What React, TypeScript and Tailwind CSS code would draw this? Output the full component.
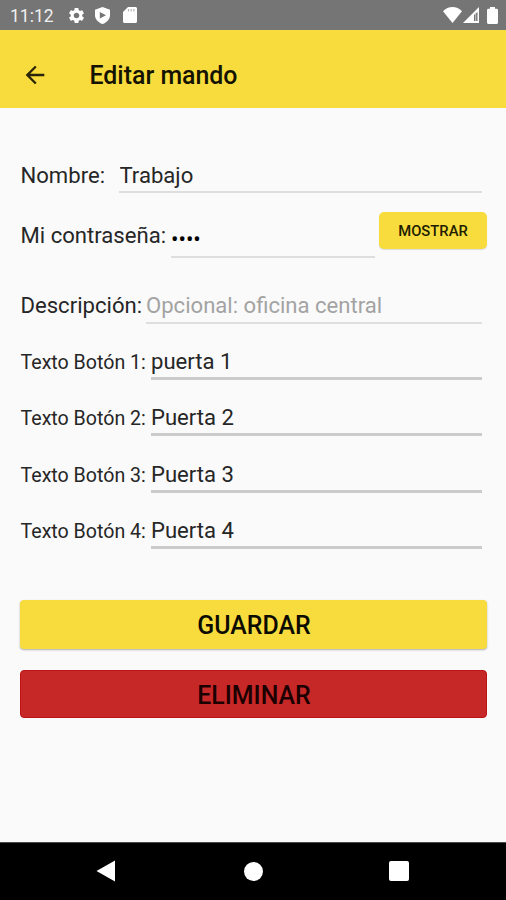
import React, { useState } from "react";
import { MdArrowBack, MdSettings } from "react-icons/md";

const buttonTexts = ["puerta 1", "Puerta 2", "Puerta 3", "Puerta 4"];

function StatusBar() {
  return (
    <div className="h-[30px] bg-[#757575] flex items-center justify-between text-white">
      <div className="flex items-center pl-[10px]">
        <span className="text-[17.5px] w-[57px] pt-[2px] leading-5 text-[#f0f0f0]">11:12</span>
        <MdSettings className="w-[19px] h-[19px]" />
        <svg className="w-[15px] h-[17px] ml-[9px]" viewBox="0 0 15 17">
          <path fill="currentColor" d="M7.5 0L15 2.8v5.4c0 4-3 7.2-7.5 8.8C3 15.4 0 12.2 0 8.2V2.8z" />
          <path fill="#757575" d="M4.8 5v6.6L11 8.3z" />
        </svg>
        <svg className="w-[14px] h-[16px] ml-[13px]" viewBox="0 0 14 16">
          <path fill="currentColor" d="M5 0h7.5C13.3 0 14 .7 14 1.5v13c0 .8-.7 1.5-1.5 1.5h-11C.7 16 0 15.3 0 14.5V5z" />
          <path stroke="#b5b5b5" strokeWidth="1.2" d="M5.5 2v2.5M8.2 2v2.5M10.9 2v2.5" />
        </svg>
      </div>
      <div className="flex items-center pr-[8px]">
        <svg className="w-[19px] h-[16px]" viewBox="0 0 19 16">
          <path fill="currentColor" d="M9.5 16L0 4.2C2.5 1.5 6 0 9.5 0S16.5 1.5 19 4.2z" />
        </svg>
        <svg className="w-[16px] h-[16px] ml-[1px]" viewBox="0 0 16 16">
          <path fill="currentColor" d="M16 0v16H0z" />
          <path fill="#757575" d="M14.5 5v9H11V8z" />
          <path fill="currentColor" d="M12.2 7h1v7h-1z" opacity="0.6" />
        </svg>
        <svg className="w-[11px] h-[17px] ml-[8px]" viewBox="0 0 11 17">
          <path fill="currentColor" d="M3 0h5v1.7h1.5c.8 0 1.5.6 1.5 1.4v12.4c0 .8-.7 1.5-1.5 1.5h-8C.7 17 0 16.3 0 15.5V3.1c0-.8.7-1.4 1.5-1.4H3z" />
        </svg>
      </div>
    </div>
  );
}

function NavigationBar() {
  return (
    <div className="h-[58px] bg-black border-t border-[#4a4a4a] flex items-center justify-between pl-[96px] pr-[97px] pb-[1px]">
      <svg className="w-[19px] h-[22px]" viewBox="0 0 19 22">
        <path fill="white" d="M19 .5v21L.5 11z" />
      </svg>
      <div className="w-[19px] h-[19px] rounded-full bg-white ml-[2px]" />
      <div className="w-5 h-5 rounded-[2px] bg-white" />
    </div>
  );
}

export default function App() {
  const [visible, setVisible] = useState(false);

  return (
    <div className="w-[506px] h-[900px] bg-[#fafafa] flex flex-col overflow-hidden font-[Roboto,sans-serif] text-[#262626]">
      <StatusBar />

      {/* App bar */}
      <header className="h-[78px] bg-[#f8dc3d] flex items-center pt-[12px] pl-[21px] text-black">
        <MdArrowBack className="w-7 h-7 mr-[40.5px] -mt-[1px] text-[#2a2508]" />
        <h1 className="text-[24.9px] leading-[30px] font-medium pt-[1px] text-[#141200]">Editar mando</h1>
      </header>

      <main className="flex-1 pl-[20px]">
        {/* Remote data */}
        <div className="h-[85px] flex items-end pr-[24px]">
          <label className="w-[99px] pl-[0.5px] pb-[5px] text-[22.1px] leading-[26px]">Nombre:</label>
          <input
            defaultValue="Trabajo"
            className="flex-1 min-w-0 h-[32px] pl-[0.5px] pb-[1px] text-[22.1px] border-b-2 border-[#dedede] outline-none"
          />
        </div>
        <div className="h-[65px] flex items-end pr-[19px]">
          <label className="w-[151px] pl-[0.5px] pb-[10px] text-[22.1px] leading-[26px] whitespace-nowrap">Mi contraseña:</label>
          <input
            type={visible ? "text" : "password"}
            defaultValue="1234"
            className="w-[204px] h-[36px] pb-[1px] text-[22.1px] text-black border-b-2 border-[#dedede] outline-none"
          />
          <button
            onClick={() => setVisible(!visible)}
            className="w-[108px] h-[37px] ml-[4px] mb-[9px] pt-[1px] rounded-[5px] bg-[#f8dc3d] text-[14.8px] font-medium text-[#221d00] shadow-[0_1px_1px_rgba(0,0,0,0.12)]"
          >
            MOSTRAR
          </button>
        </div>
        <div className="h-[66px] flex items-end pr-[24px]">
          <label className="w-[126px] pl-[0.5px] pb-[6px] text-[22.1px] leading-[26px] whitespace-nowrap">Descripción:</label>
          <input
            placeholder="Opcional: oficina central"
            className="flex-1 min-w-0 h-[33px] pb-[1px] text-[22.1px] border-b-2 border-[#dedede] placeholder-[#a3a3a3] outline-none"
          />
        </div>

        {/* Button labels */}
        {buttonTexts.map((text, i) => (
          <div key={text} className="h-[56.2px] flex items-end pr-[24px]">
            <label className="w-[131px] pl-[0.5px] pb-[5px] text-[19.6px] leading-[24px] whitespace-nowrap">
              Texto Botón {i + 1}:
            </label>
            <input
              defaultValue={text}
              className="flex-1 min-w-0 h-[33px] pb-[1px] text-[22.1px] border-b-3 border-[#cbcbcb] outline-none"
            />
          </div>
        ))}

        {/* Actions */}
        <div className="flex flex-col pt-[51px] pr-[19px] gap-[21px] text-[24.9px] font-medium text-[#0c0b00]">
          <button className="h-[49px] pt-[2px] pl-[1px] rounded-[4px] bg-[#f8dc3d] shadow-[0_1px_2px_rgba(0,0,0,0.3)]">
            GUARDAR
          </button>
          <button className="h-[48px] pt-[3px] pl-[1px] rounded-[4px] bg-[#c62828] border border-[#bd1216] text-[#1c0000]">
            ELIMINAR
          </button>
        </div>
      </main>

      <NavigationBar />
    </div>
  );
}
